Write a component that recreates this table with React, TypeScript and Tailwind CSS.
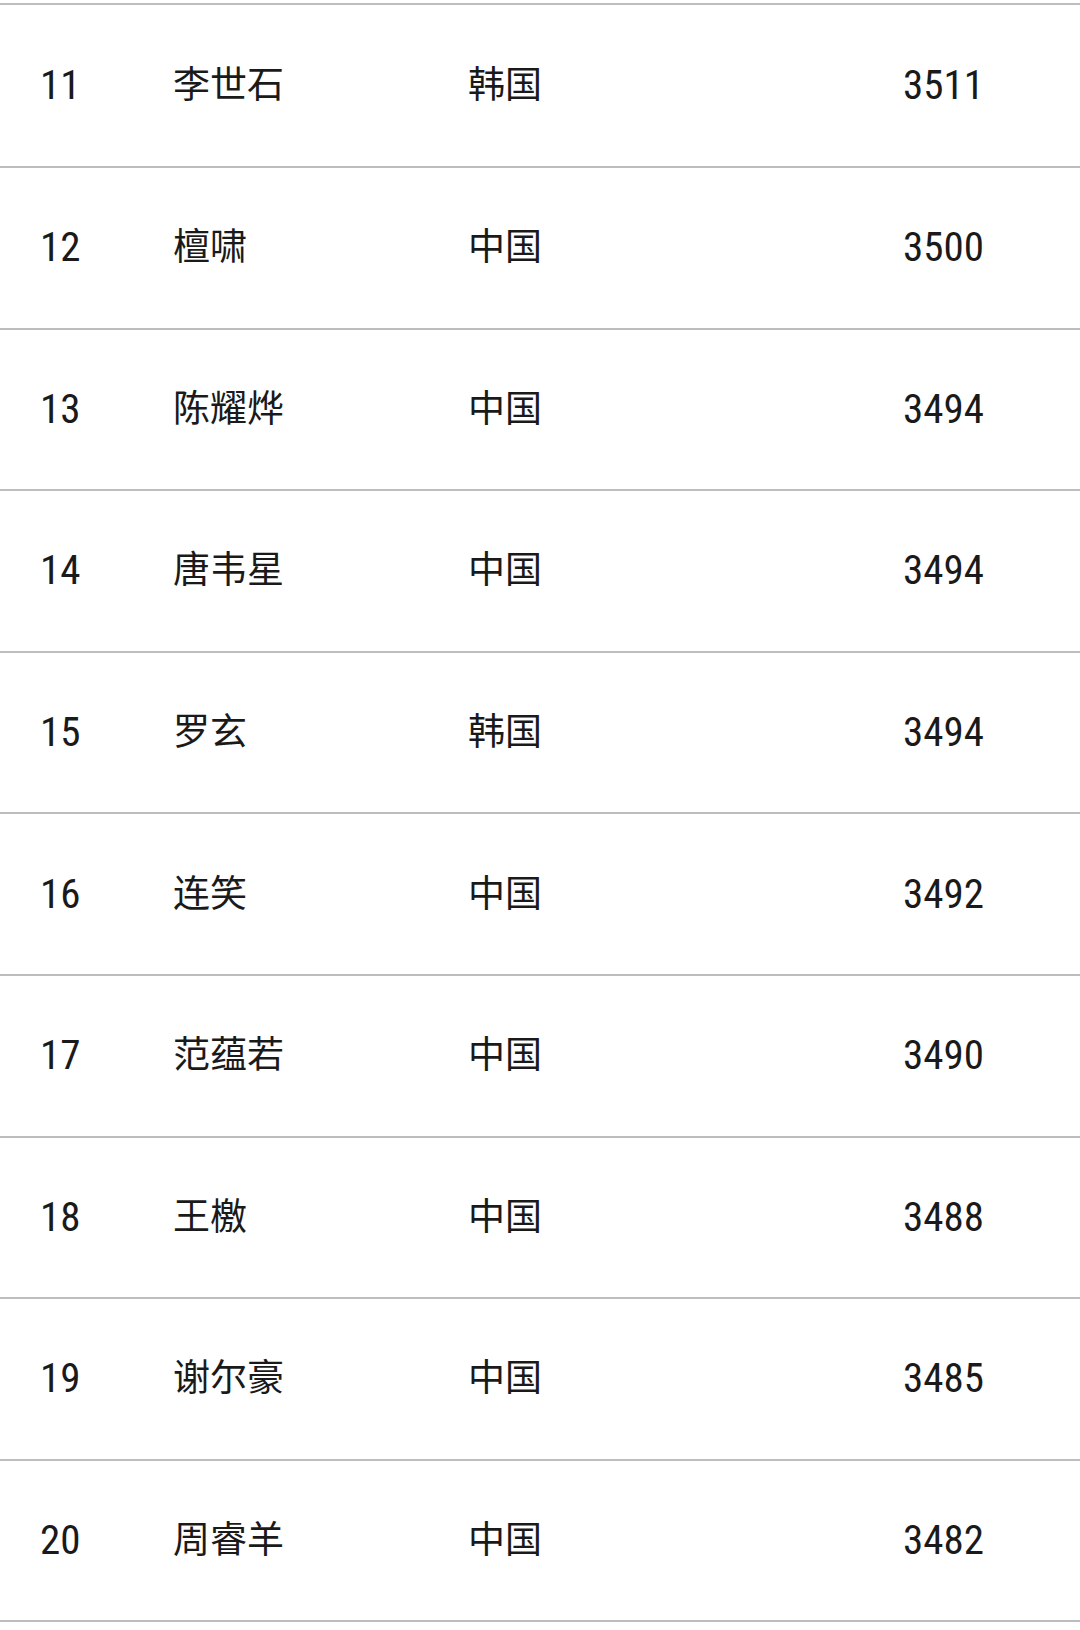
const rows = [
  { rank: 11, name: "李世石", country: "韩国", score: 3511 },
  { rank: 12, name: "檀啸", country: "中国", score: 3500 },
  { rank: 13, name: "陈耀烨", country: "中国", score: 3494 },
  { rank: 14, name: "唐韦星", country: "中国", score: 3494 },
  { rank: 15, name: "罗玄", country: "韩国", score: 3494 },
  { rank: 16, name: "连笑", country: "中国", score: 3492 },
  { rank: 17, name: "范蕴若", country: "中国", score: 3490 },
  { rank: 18, name: "王檄", country: "中国", score: 3488 },
  { rank: 19, name: "谢尔豪", country: "中国", score: 3485 },
  { rank: 20, name: "周睿羊", country: "中国", score: 3482 },
];

const font = { fontFamily: '"Roboto", "Noto Sans CJK SC", sans-serif' };

export default function App() {
  return (
    <div className="w-[1080px] h-[1630px] bg-white pt-[3px] overflow-hidden" style={font}>
      <div className="border-t-2 border-[#bdbdbd]">
        {rows.map((r, i) => (
          <div
            key={r.rank}
            className={`grid grid-cols-[133px_295px_435px_1fr] items-center pl-[40px] border-b-2 border-[#bdbdbd] text-[#1a1a1a] ${
              i === 0 ? "h-[163px]" : "h-[161.6px]"
            }`}
          >
            <span className="leading-none text-[41px] [font-stretch:85%]">{r.rank}</span>
            <span className="leading-none text-[37px]">{r.name}</span>
            <span className="leading-none text-[37px]">{r.country}</span>
            <span className="leading-none text-[41px] [font-stretch:85%]">{r.score}</span>
          </div>
        ))}
      </div>
    </div>
  );
}
